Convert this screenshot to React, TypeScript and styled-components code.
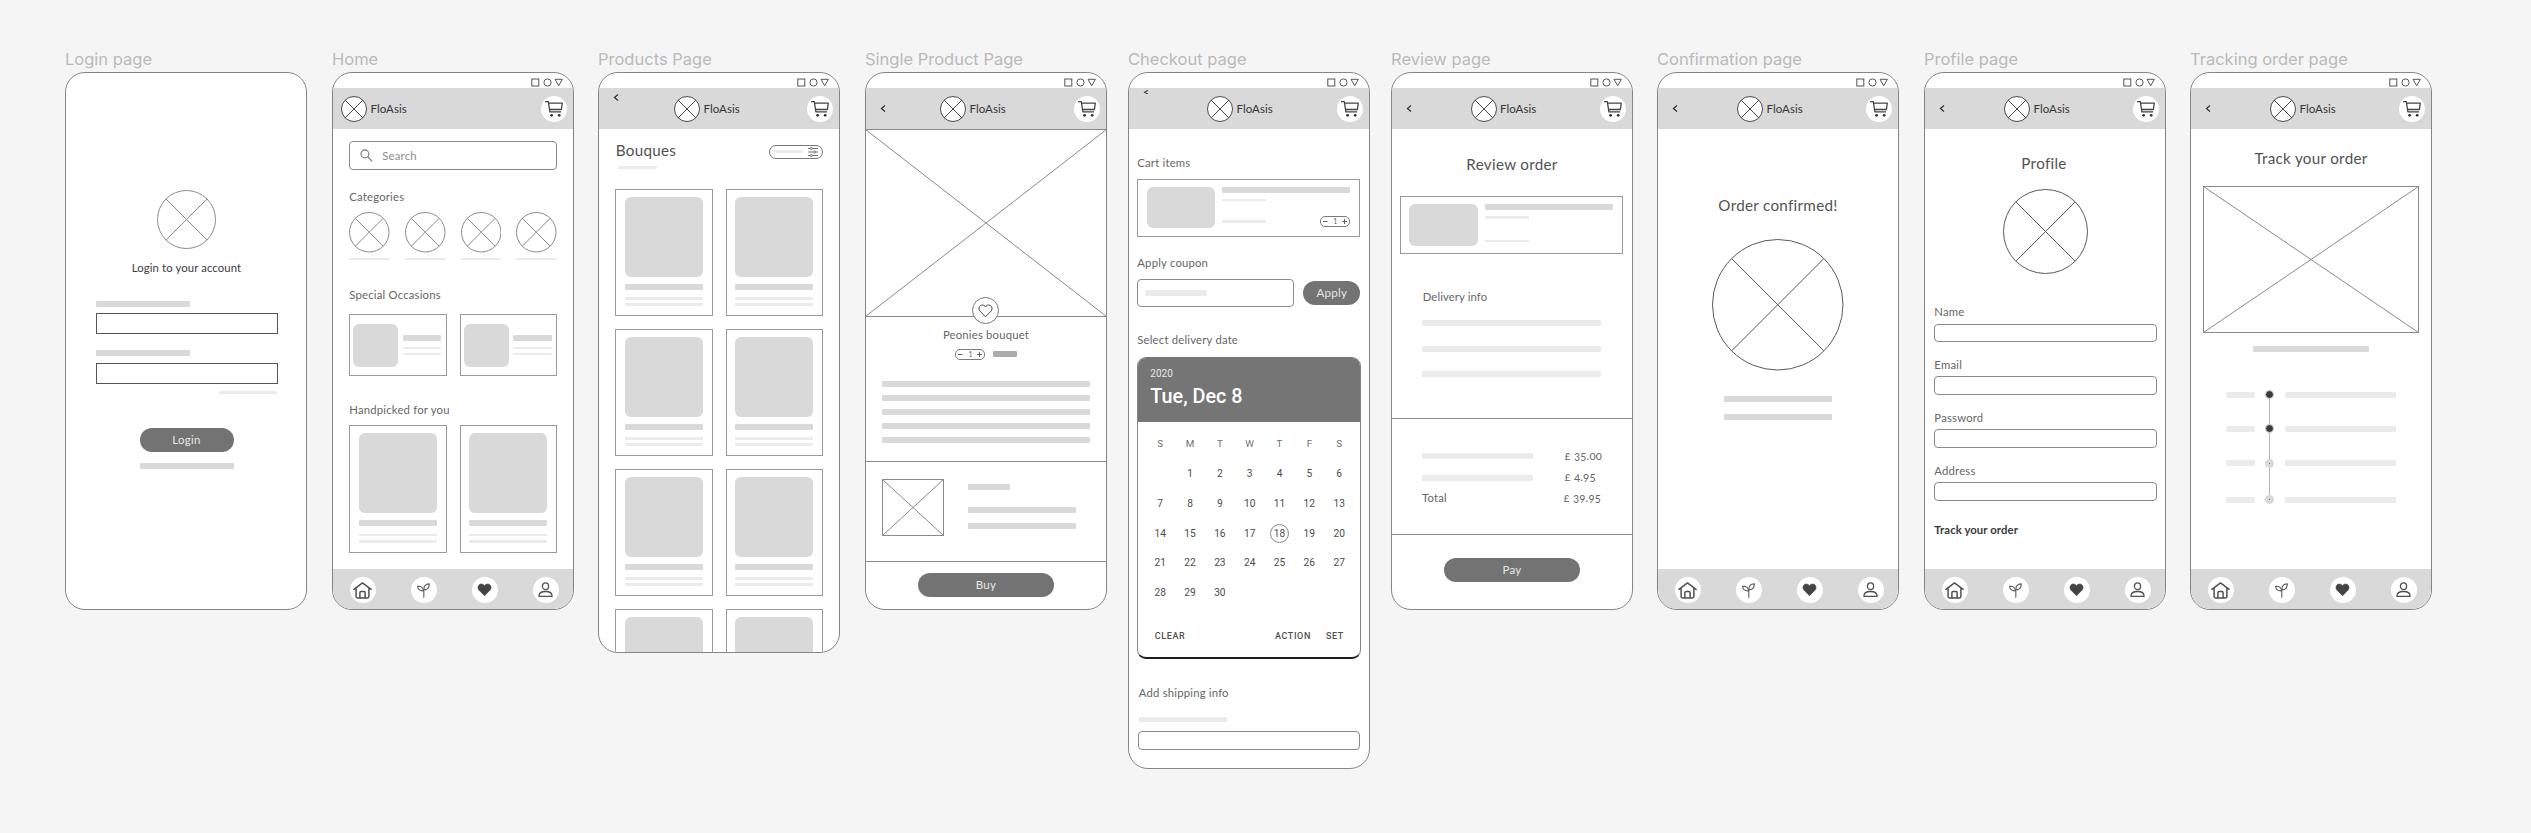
import React from "react";
import styled, { createGlobalStyle, css } from "styled-components";

const ink = "#525252";
const edge = "#8a8a8a";
const tone = { soft: "#ebebeb", mid: "#d9d9d9", strong: "#ababab" };
type Tone = keyof typeof tone;

const GlobalStyle = createGlobalStyle`
  * { box-sizing: border-box; }
  body { margin: 0; background: #f5f5f5; }
  svg { display: block; flex: none; }
`;

/* ---------- canvas ---------- */

const Canvas = styled.main`
  width: 2531px;
  height: 833px;
  padding: 47px 0 0 65px;
  background: #f5f5f5;
  display: flex;
  align-items: flex-start;
  font-family: Lato, "Liberation Sans", sans-serif;
  color: ${ink};
  overflow: hidden;
`;

const Artboard = styled.section<{ $gap?: number }>`
  width: 242px;
  margin-left: ${(p) => p.$gap ?? 0}px;
  flex: none;
`;

const ArtboardName = styled.h2`
  margin: 0;
  height: 25px;
  font: 400 16.5px/24px Inter, sans-serif;
  color: #bababa;
  white-space: nowrap;
`;

const Frame = styled.div<{ $h?: number }>`
  height: ${(p) => p.$h ?? 538}px;
  border: 1px solid #858585;
  border-radius: 20px;
  background: #fff;
  overflow: hidden;
  display: flex;
  flex-direction: column;
`;

const StatusBar = styled.div`
  height: 15px;
  flex: none;
  padding: 4.5px 10px 0 0;
  display: flex;
  justify-content: flex-end;
`;

const TopBar = styled.header`
  height: 41px;
  flex: none;
  padding-right: 6px;
  background: #d9d9d9;
  display: flex;
  align-items: center;
`;

const BackSlot = styled.div<{ $w: number; $top: number }>`
  width: ${(p) => p.$w}px;
  height: 100%;
  flex: none;
  padding-top: ${(p) => p.$top}px;

  svg {
    margin-left: 13.5px;
  }
`;

const BrandName = styled.span`
  margin-left: 3.5px;
  font-size: 11.5px;
  line-height: 14px;
  letter-spacing: 0.05px;
  color: #363636;
`;

const Disc = styled.span<{ $push?: boolean }>`
  width: 26px;
  height: 26px;
  flex: none;
  margin-left: ${(p) => (p.$push ? "auto" : "0")};
  border-radius: 50%;
  background: #fff;
  display: flex;
  align-items: center;
  justify-content: center;
`;

const Body = styled.div<{ $left?: number; $center?: boolean }>`
  flex: 1;
  min-height: 0;
  padding-left: ${(p) => p.$left ?? 0}px;
  display: flex;
  flex-direction: column;
  align-items: ${(p) => (p.$center ? "center" : "flex-start")};
`;

const BottomBar = styled.nav`
  height: 40px;
  flex: none;
  padding: 2px 14px 0 16.7px;
  background: #d9d9d9;
  display: flex;
  align-items: center;
  justify-content: space-between;
`;

/* ---------- shared parts ---------- */

interface Space {
  $mt?: number;
  $ml?: number;
}
const space = css<Space>`
  margin: ${(p) => p.$mt ?? 0}px 0 0 ${(p) => p.$ml ?? 0}px;
`;

const Label = styled.p<Space & { $bold?: boolean; $dark?: boolean; $ls?: number }>`
  ${space}
  font-size: 11.3px;
  line-height: 14px;
  letter-spacing: ${(p) => p.$ls ?? 0.2}px;
  font-weight: ${(p) => (p.$bold ? 700 : 400)};
  color: ${(p) => (p.$dark ? "#3c3c3c" : p.$bold ? "#3a3a3a" : "#666")};
  white-space: nowrap;
`;

const Heading = styled.h1<Space>`
  ${space}
  font-size: 15.2px;
  font-weight: 400;
  line-height: 18px;
  letter-spacing: 0.3px;
  color: ${ink};
  white-space: nowrap;
`;

const Bar = styled.div<Space & { $w: number; $h?: number; $tone?: Tone }>`
  ${space}
  width: ${(p) => p.$w}px;
  height: ${(p) => p.$h ?? 6}px;
  flex: none;
  border-radius: 1.3px;
  background: ${(p) => tone[p.$tone ?? "mid"]};
`;

const Field = styled.div<Space & { $w: number; $h: number; $square?: boolean }>`
  ${space}
  width: ${(p) => p.$w}px;
  height: ${(p) => p.$h}px;
  flex: none;
  border: 1px solid ${(p) => (p.$square ? "#555" : edge)};
  border-radius: ${(p) => (p.$square ? 0 : 4)}px;
  background: #fff;
  display: flex;
  align-items: center;
`;

const Pill = styled.button<Space & { $w: number; $h: number }>`
  ${space}
  width: ${(p) => p.$w}px;
  height: ${(p) => p.$h}px;
  flex: none;
  padding: 0;
  border: 0;
  border-radius: 14px;
  background: #737373;
  color: #e6e6e6;
  font: 400 11.5px/1 Lato, sans-serif;
  letter-spacing: 0.3px;
`;

const Row = styled.div<Space & { $gap?: number; $w?: number; $align?: string; $between?: boolean }>`
  ${space}
  width: ${(p) => (p.$w ? `${p.$w}px` : "auto")};
  display: flex;
  flex: none;
  gap: ${(p) => p.$gap ?? 0}px;
  align-items: ${(p) => p.$align ?? "flex-start"};
  justify-content: ${(p) => (p.$between ? "space-between" : "flex-start")};
`;

const Column = styled.div<Space>`
  ${space}
  display: flex;
  flex-direction: column;
  flex: none;
`;

const Rule = styled.hr<Space>`
  ${space}
  width: 100%;
  height: 1px;
  flex: none;
  border: 0;
  background: #8c8c8c;
`;

const Card = styled.div<{ $h: number; $w?: number; $pad: string }>`
  width: ${(p) => p.$w ?? 97.3}px;
  height: ${(p) => p.$h}px;
  flex: none;
  padding: ${(p) => p.$pad};
  border: 1px solid #9a9a9a;
  background: #fff;
`;

const Thumb = styled.div<{ $w: number; $h: number }>`
  width: ${(p) => p.$w}px;
  height: ${(p) => p.$h}px;
  flex: none;
  border-radius: 6px;
  background: ${tone.mid};
`;

const CardGrid = styled.div<Space>`
  ${space}
  display: grid;
  grid-template-columns: 97.3px 97.3px;
  gap: 12.3px 13px;
  flex: none;
`;

const StepperBox = styled.div`
  width: 30px;
  height: 11px;
  padding: 0 2px;
  border: 1px solid #7a7a7a;
  border-radius: 5px;
  display: flex;
  align-items: center;
  justify-content: space-between;
  font-size: 7px;
  line-height: 9px;
  color: #666;
`;

/* ---------- drawings ---------- */

interface CrossCircleProps {
  size: number;
  stroke?: string;
  fill?: string;
}

const CrossCircle = ({ size, stroke = edge, fill = "none" }: CrossCircleProps) => {
  const c = size / 2;
  const r = c - 0.5;
  const d = r * Math.SQRT1_2;
  return (
    <svg width={size} height={size} fill="none" stroke={stroke}>
      <circle cx={c} cy={c} r={r} fill={fill} />
      <path d={`M${c - d} ${c - d}L${c + d} ${c + d}M${c + d} ${c - d}L${c - d} ${c + d}`} />
    </svg>
  );
};

const CrossBox = ({ w, h }: { w: number; h: number }) => (
  <svg width={w} height={h} fill="none" stroke={edge}>
    <rect x=".5" y=".5" width={w - 1} height={h - 1} />
    <path d={`M.5 .5L${w - 0.5} ${h - 0.5}M${w - 0.5} .5L.5 ${h - 0.5}`} />
  </svg>
);

const SystemIcons = () => (
  <svg width="32" height="9" fill="none" stroke="#555">
    <rect x=".8" y="1" width="7" height="7" />
    <circle cx="16.5" cy="4.5" r="3.6" />
    <path d="M24 1.3h7.4L27.7 7.8z" />
  </svg>
);

const Chevron = ({ flat = 7 }: { flat?: number }) => (
  <svg width="6" height={flat} viewBox="0 0 6 7" preserveAspectRatio="none" fill="none" stroke="#333" strokeWidth="1.3">
    <path d="M5 .5 1.5 3.5 5 6.5" />
  </svg>
);

const CartIcon = () => (
  <svg width="18" height="16" fill="none" stroke="#444" strokeWidth="1.3">
    <path d="M0 .7h3.3l1.6 10.2h11.2M3.7 2.2h13.6l-.9 6.3H4.6" strokeLinejoin="round" />
    <circle cx="6.6" cy="14.3" r="1.4" fill="#333" stroke="none" />
    <circle cx="14.2" cy="14.3" r="1.4" fill="#333" stroke="none" />
  </svg>
);

const HomeIcon = () => (
  <svg width="19" height="17" fill="none" stroke="#505050" strokeWidth="1.5" strokeLinecap="round" strokeLinejoin="round">
    <path d="M.9 7.4 9.5 .9l8.6 6.5M3.1 6.2v8a1.8 1.8 0 0 0 1.8 1.8h9.2a1.8 1.8 0 0 0 1.8-1.8v-8" />
    <path d="M6.9 15.8V10.6a1.2 1.2 0 0 1 1.2-1.2h2.8a1.2 1.2 0 0 1 1.2 1.2v5.2" />
  </svg>
);

const SproutIcon = () => (
  <svg width="13" height="15" fill="none" stroke="#5c5c5c" strokeWidth="1.1" strokeLinecap="round" strokeLinejoin="round">
    <path d="M6.8 14.3V7.6" />
    <path d="M6.6 7.8C6.2 4 4 3 .6 3.2 .8 6.6 3 8.2 6.6 7.8Z" />
    <path d="M6.9 6.9C6.7 2.8 8.6 .8 12.3 .9 12.4 4.6 10.6 6.8 6.9 6.9Z" />
  </svg>
);

const HeartIcon = ({ outline }: { outline?: boolean }) => (
  <svg width="15" height="14" fill={outline ? "none" : "#444"} stroke="#444" strokeWidth={outline ? 1 : 0.6} strokeLinejoin="round">
    <path d="M7.5 12.8 2 7.2C-.3 4.5 1.6 1 4.3 1 5.9 1 6.9 1.9 7.5 2.9 8.1 1.9 9.1 1 10.7 1 13.4 1 15.3 4.5 13 7.2Z" />
  </svg>
);

const UserIcon = () => (
  <svg width="15" height="16" fill="none" stroke="#505050" strokeWidth="1.3" strokeLinejoin="round">
    <ellipse cx="7.5" cy="4.2" rx="3.1" ry="3.4" />
    <path d="M.9 14.3C.9 11.3 3.5 9.5 7.5 9.5S14.1 11.3 14.1 14.3Z" />
  </svg>
);

const SearchIcon = () => (
  <svg width="13" height="13" fill="none" stroke="#888" strokeWidth="1.3">
    <circle cx="4.9" cy="4.9" r="3.9" />
    <path d="M7.7 7.7 12.2 12.2" />
  </svg>
);

const SlidersIcon = () => (
  <svg width="10" height="10" fill="#fff" stroke="#666" strokeWidth=".9">
    <path d="M0 1.5h10M0 5h10M0 8.5h10" />
    <circle cx="3.2" cy="1.5" r="1" />
    <circle cx="6.6" cy="5" r="1" />
    <circle cx="3.2" cy="8.5" r="1" />
  </svg>
);

/* ---------- composed pieces ---------- */

const Header = ({ brandAt, back }: { brandAt: number; back?: { top: number; h?: number } }) => (
  <>
    <StatusBar>
      <SystemIcons />
    </StatusBar>
    <TopBar>
      <BackSlot $w={brandAt - 1} $top={back?.top ?? 0}>
        {back && <Chevron flat={back.h} />}
      </BackSlot>
      <CrossCircle size={26} stroke="#4a4a4a" fill="#fff" />
      <BrandName>FloAsis</BrandName>
      <Disc $push>
        <CartIcon />
      </Disc>
    </TopBar>
  </>
);

const Nav = () => (
  <BottomBar>
    <Disc><HomeIcon /></Disc>
    <Disc><SproutIcon /></Disc>
    <Disc><HeartIcon /></Disc>
    <Disc><UserIcon /></Disc>
  </BottomBar>
);

const Stepper = () => (
  <StepperBox>
    <svg width="5" height="5" stroke="#555" strokeWidth=".9"><path d="M0 2.5h4.5" /></svg>
    1
    <svg width="5" height="5" stroke="#555" strokeWidth=".9"><path d="M0 2.5h5M2.5 0v5" /></svg>
  </StepperBox>
);

const ProductCard = () => (
  <Card $h={127.7} $pad="7px 0 0 8.5px">
    <Thumb $w={78} $h={80} />
    <Bar $w={78} $mt={7} />
    <Bar $w={78} $mt={7.5} $h={2.6} $tone="soft" />
    <Bar $w={78} $mt={3.5} $h={2.6} $tone="soft" />
  </Card>
);

const OccasionCard = () => (
  <Card $h={62} $pad="9px 0 0 3px">
    <Row $gap={4.5}>
      <Thumb $w={45} $h={43} />
      <Column $mt={11}>
        <Bar $w={38.6} />
        <Bar $w={38.6} $mt={6} $h={2.5} $tone="soft" />
        <Bar $w={38.6} $mt={3.5} $h={2.5} $tone="soft" />
      </Column>
    </Row>
  </Card>
);

const CartCard = ({ stepper }: { stepper?: boolean }) => (
  <Card $w={222.5} $h={58} $pad="7px 0 0 8.3px">
    <Row $gap={7.5}>
      <Thumb $w={68.3} $h={41.6} />
      <Column>
        <Bar $w={128} />
        <Bar $w={43.6} $mt={6} $h={2.5} $tone="soft" />
        <Row $w={128} $mt={stepper ? 15 : 21} $between $align="center">
          <Bar $w={43.6} $h={2.5} $tone="soft" />
          {stepper && <Stepper />}
        </Row>
      </Column>
    </Row>
  </Card>
);

/* ---------- screens ---------- */

const Login = () => (
  <Frame>
    <Body $center>
      <Column $mt={117} $ml={1}><CrossCircle size={59} /></Column>
      <Label $mt={12} $ml={1} $dark $ls={0.12}>Login to your account</Label>
      <Column $mt={26} $ml={1}>
        <Bar $w={94} />
        <Field $mt={6} $w={182} $h={21} $square />
        <Bar $w={94} $mt={16} />
        <Field $mt={7} $w={182} $h={21} $square />
        <Bar $w={58} $h={2.5} $mt={7} $ml={123.5} $tone="soft" />
      </Column>
      <Pill $mt={34.5} $ml={1} $w={94} $h={23.5}>Login</Pill>
      <Bar $w={94} $mt={11} $ml={1} />
    </Body>
  </Frame>
);

const SearchText = styled.span`
  margin-left: 9.5px;
  font-size: 11.3px;
  letter-spacing: 0.2px;
  color: #8c8c8c;
`;

const SearchField = styled(Field)`
  padding-left: 9.5px;
`;

const CouponField = styled(Field)`
  padding-left: 6.5px;
`;

const Home = () => (
  <Frame>
    <Header brandAt={9} />
    <Body $left={16.3}>
      <SearchField $mt={12} $w={207.5} $h={28.7}>
        <SearchIcon />
        <SearchText>Search</SearchText>
      </SearchField>
      <Label $mt={20.5}>Categories</Label>
      <Row $mt={8.1} $w={207.7} $between>
        {[0, 1, 2, 3].map((i) => (
          <Column key={i}>
            <CrossCircle size={40.5} />
            <Bar $w={40.5} $mt={5} $h={2.6} $tone="soft" />
          </Column>
        ))}
      </Row>
      <Label $mt={27.4}>Special Occasions</Label>
      <CardGrid $mt={12.1}>
        <OccasionCard />
        <OccasionCard />
      </CardGrid>
      <Label $mt={26.9}>Handpicked for you</Label>
      <CardGrid $mt={8.6}>
        <ProductCard />
        <ProductCard />
      </CardGrid>
    </Body>
    <Nav />
  </Frame>
);

const FilterPill = styled.div`
  width: 54px;
  height: 14px;
  padding: 0 4px;
  border: 1px solid #777;
  border-radius: 7px;
  display: flex;
  align-items: center;
  justify-content: space-between;
`;

const Products = () => (
  <Frame $h={581}>
    <Header brandAt={76} back={{ top: 6 }} />
    <Body $left={16.3}>
      <Row $mt={11.5} $w={207.7} $between $align="flex-end">
        <Heading $ml={0.5}>Bouques</Heading>
        <FilterPill>
          <Bar $w={29.5} $h={3.5} $tone="soft" />
          <SlidersIcon />
        </FilterPill>
      </Row>
      <Bar $w={39.6} $h={3} $mt={7} $ml={2.3} $tone="soft" />
      <CardGrid $mt={20.3}>
        {Array.from({ length: 8 }, (_, i) => <ProductCard key={i} />)}
      </CardGrid>
    </Body>
  </Frame>
);

const Hero = styled.div`
  position: relative;
  margin: 0 -1px;
`;

const LikeBadge = styled.div`
  position: absolute;
  left: 50%;
  bottom: -7px;
  width: 27px;
  height: 27px;
  margin-left: -14px;
  border: 1px solid #777;
  border-radius: 50%;
  background: #fff;
  display: flex;
  align-items: center;
  justify-content: center;
`;

const SingleProduct = () => (
  <Frame>
    <Header brandAt={75} back={{ top: 17 }} />
    <Body $center>
      <Hero>
        <CrossBox w={242} h={188} />
        <LikeBadge><HeartIcon outline /></LikeBadge>
      </Hero>
      <Label $mt={11}>Peonies bouquet</Label>
      <Row $mt={6.7} $gap={7.5} $align="center">
        <Stepper />
        <Bar $w={23.6} $tone="strong" />
      </Row>
      <Column $mt={21.3}>
        <Bar $w={207.7} />
        {[0, 1, 2, 3].map((i) => <Bar key={i} $w={207.7} $mt={8.1} />)}
      </Column>
      <Rule $mt={17.5} />
      <Row $mt={17} $w={207.7} $gap={24}>
        <CrossBox w={62} h={57} />
        <Column $mt={5.5}>
          <Bar $w={42} />
          <Bar $w={108} $mt={17} />
          <Bar $w={108} $mt={9.6} />
        </Column>
      </Row>
      <Rule $mt={25} />
      <Pill $mt={11} $w={135.5} $h={24}>Buy</Pill>
    </Body>
  </Frame>
);

const Calendar = styled.div<Space>`
  ${space}
  width: 223.5px;
  height: 302px;
  flex: none;
  border: 1px solid #858585;
  border-top-color: #757575;
  border-bottom: 2px solid #1e1e1e;
  border-radius: 9px;
  overflow: hidden;
  font-family: Roboto, sans-serif;
`;

const CalendarTop = styled.div`
  height: 64px;
  padding: 10px 0 0 12px;
  background: #757575;
  color: #fff;
`;

const Year = styled.div`
  font-size: 10px;
  line-height: 12px;
  color: #e8e8e8;
`;

const PickedDate = styled.div`
  margin-top: 5px;
  font-size: 19.8px;
  font-weight: 500;
  line-height: 24px;
`;

const DayGrid = styled.div`
  margin: 7px 0 0 7px;
  display: grid;
  grid-template-columns: repeat(7, 29.83px);
  grid-auto-rows: 29.75px;
  place-items: center;
`;

const Day = styled.span<{ $ring?: boolean; $head?: boolean }>`
  width: 19px;
  height: 19px;
  border: 1px solid ${(p) => (p.$ring ? "#888" : "transparent")};
  border-radius: 50%;
  display: flex;
  align-items: center;
  justify-content: center;
  font-size: ${(p) => (p.$head ? 9.8 : 10.2)}px;
  color: ${(p) => (p.$head ? "#707070" : "#4c4c4c")};
`;

const CalendarActions = styled.div`
  margin: 22px 16px 0 16.5px;
  display: flex;
  font-size: 9px;
  font-weight: 500;
  line-height: 12px;
  letter-spacing: 0.6px;
  color: #505050;
`;

const Action = styled.span<{ $push?: boolean }>`
  margin-left: ${(p) => (p.$push ? "auto" : "0")};
  & + & + & { margin-left: 15px; }
`;

const Checkout = () => (
  <Frame $h={697}>
    <Header brandAt={79} back={{ top: 1.5, h: 4.5 }} />
    <Body $left={8.3}>
      <Label $mt={26.5}>Cart items</Label>
      <Column $mt={9}><CartCard stepper /></Column>
      <Label $mt={19.5}>Apply coupon</Label>
      <Row $mt={8.5} $gap={9.5} $align="center">
        <CouponField $w={156.5} $h={28.5}>
          <Bar $w={62} $tone="soft" />
        </CouponField>
        <Pill $w={57} $h={24.5}>Apply</Pill>
      </Row>
      <Label $mt={26}>Select delivery date</Label>
      <Calendar $mt={10}>
        <CalendarTop>
          <Year>2020</Year>
          <PickedDate>Tue, Dec 8</PickedDate>
        </CalendarTop>
        <DayGrid>
          {["S", "M", "T", "W", "T", "F", "S"].map((d, i) => <Day key={i} $head>{d}</Day>)}
          <Day />
          {Array.from({ length: 30 }, (_, i) => <Day key={i} $ring={i === 17}>{i + 1}</Day>)}
        </DayGrid>
        <CalendarActions>
          <Action>CLEAR</Action>
          <Action $push>ACTION</Action>
          <Action>SET</Action>
        </CalendarActions>
      </Calendar>
      <Label $mt={27} $ml={1.5}>Add shipping info</Label>
      <Bar $w={88} $h={4.6} $mt={17} $ml={1.5} $tone="soft" />
      <Field $w={222} $h={19} $mt={9.5} $ml={1} />
    </Body>
  </Frame>
);

const Price = styled(Label)`
  font-variant-numeric: oldstyle-nums;
`;

const Review = () => (
  <Frame>
    <Header brandAt={79.5} back={{ top: 17 }} />
    <Body $center>
      <Heading $mt={26}>Review order</Heading>
      <Column $mt={23} $ml={-1.5}><CartCard /></Column>
      <Column $mt={35.5} $ml={-1.5}>
        <Label $ml={1} $ls={0.1}>Delivery info</Label>
        <Bar $w={179} $mt={16.5} $tone="soft" />
        <Bar $w={179} $mt={19.6} $tone="soft" />
        <Bar $w={179} $mt={19.6} $tone="soft" />
      </Column>
      <Rule $mt={41} />
      <Row $mt={29.5} $w={180} $between>
        <Column $mt={4.5}>
          <Bar $w={111} $tone="soft" />
          <Bar $w={111} $mt={15.5} $tone="soft" />
          <Label $mt={10}>Total</Label>
        </Column>
        <Column>
          <Price>£ 35.00</Price>
          <Price $mt={7}>£ 4.95</Price>
          <Price $mt={7} $ml={-1}>£ 39.95</Price>
        </Column>
      </Row>
      <Rule $mt={29.5} />
      <Pill $mt={22.5} $w={135.5} $h={24}>Pay</Pill>
    </Body>
  </Frame>
);

const Confirmation = () => (
  <Frame>
    <Header brandAt={80} back={{ top: 17 }} />
    <Body $center>
      <Heading $mt={67}>Order confirmed!</Heading>
      <Column $mt={25}><CrossCircle size={131.5} stroke="#5a5a5a" /></Column>
      <Bar $w={107.7} $mt={25.5} />
      <Bar $w={107.7} $mt={12.2} />
    </Body>
    <Nav />
  </Frame>
);

const Profile = () => (
  <Frame>
    <Header brandAt={80} back={{ top: 17 }} />
    <Body $center>
      <Heading $mt={25} $ml={-2}>Profile</Heading>
      <Column $mt={17}><CrossCircle size={85} stroke="#5a5a5a" /></Column>
      <Column $mt={31.3} $ml={0.6}>
        {["Name", "Email", "Password", "Address"].map((name, i) => (
          <Column key={name} $mt={i ? 15.9 : 0}>
            <Label $ml={0.3}>{name}</Label>
            <Field $w={222.5} $h={18.7} $mt={4.3} />
          </Column>
        ))}
        <Label $bold $mt={22.4} $ml={0.3} $ls={0.1}>Track your order</Label>
      </Column>
    </Body>
    <Nav />
  </Frame>
);

const Timeline = styled.div`
  margin-top: 38px;
  width: 170px;
  display: grid;
  grid-template-columns: 28.7px 30px 111px;
  grid-template-rows: 34.4px 34.2px 36.8px 9px;
  align-items: start;
  justify-items: center;
`;

const Stop = styled.span<{ $done?: boolean }>`
  width: 9px;
  height: 9px;
  flex: none;
  border-radius: 50%;
  border: ${(p) => (p.$done ? 1 : 4.5)}px solid #d9d9d9;
  background: #3c3c3c;
`;

const Track = styled.div`
  height: 100%;
  display: flex;
  flex-direction: column;
  align-items: center;
`;

const Link = styled.span`
  width: 1.5px;
  flex: 1;
  background: #b5b5b5;
`;

const Tracking = () => (
  <Frame>
    <Header brandAt={80} back={{ top: 17 }} />
    <Body $center>
      <Heading $mt={19.5}>Track your order</Heading>
      <Column $mt={19.5}><CrossBox w={216} h={147} /></Column>
      <Bar $w={116} $mt={13} />
      <Timeline>
        {[true, true, false, false].map((done, i) => (
          <React.Fragment key={i}>
            <Bar $w={28.7} $mt={1.5} $tone="soft" />
            <Track>
              <Stop $done={done} />
              {i < 3 && <Link />}
            </Track>
            <Bar $w={111} $mt={1.5} $tone="soft" />
          </React.Fragment>
        ))}
      </Timeline>
    </Body>
    <Nav />
  </Frame>
);

const boards = [
  { name: "Login page", gap: 0, Screen: Login },
  { name: "Home", gap: 25, Screen: Home },
  { name: "Products Page", gap: 24, Screen: Products },
  { name: "Single Product Page", gap: 25, Screen: SingleProduct },
  { name: "Checkout page", gap: 21, Screen: Checkout },
  { name: "Review page", gap: 21, Screen: Review },
  { name: "Confirmation page", gap: 24, Screen: Confirmation },
  { name: "Profile page", gap: 25, Screen: Profile },
  { name: "Tracking order page", gap: 24, Screen: Tracking },
];

export default function App() {
  return (
    <>
      <GlobalStyle />
      <Canvas>
        {boards.map(({ name, gap, Screen }) => (
          <Artboard key={name} $gap={gap}>
            <ArtboardName>{name}</ArtboardName>
            <Screen />
          </Artboard>
        ))}
      </Canvas>
    </>
  );
}
